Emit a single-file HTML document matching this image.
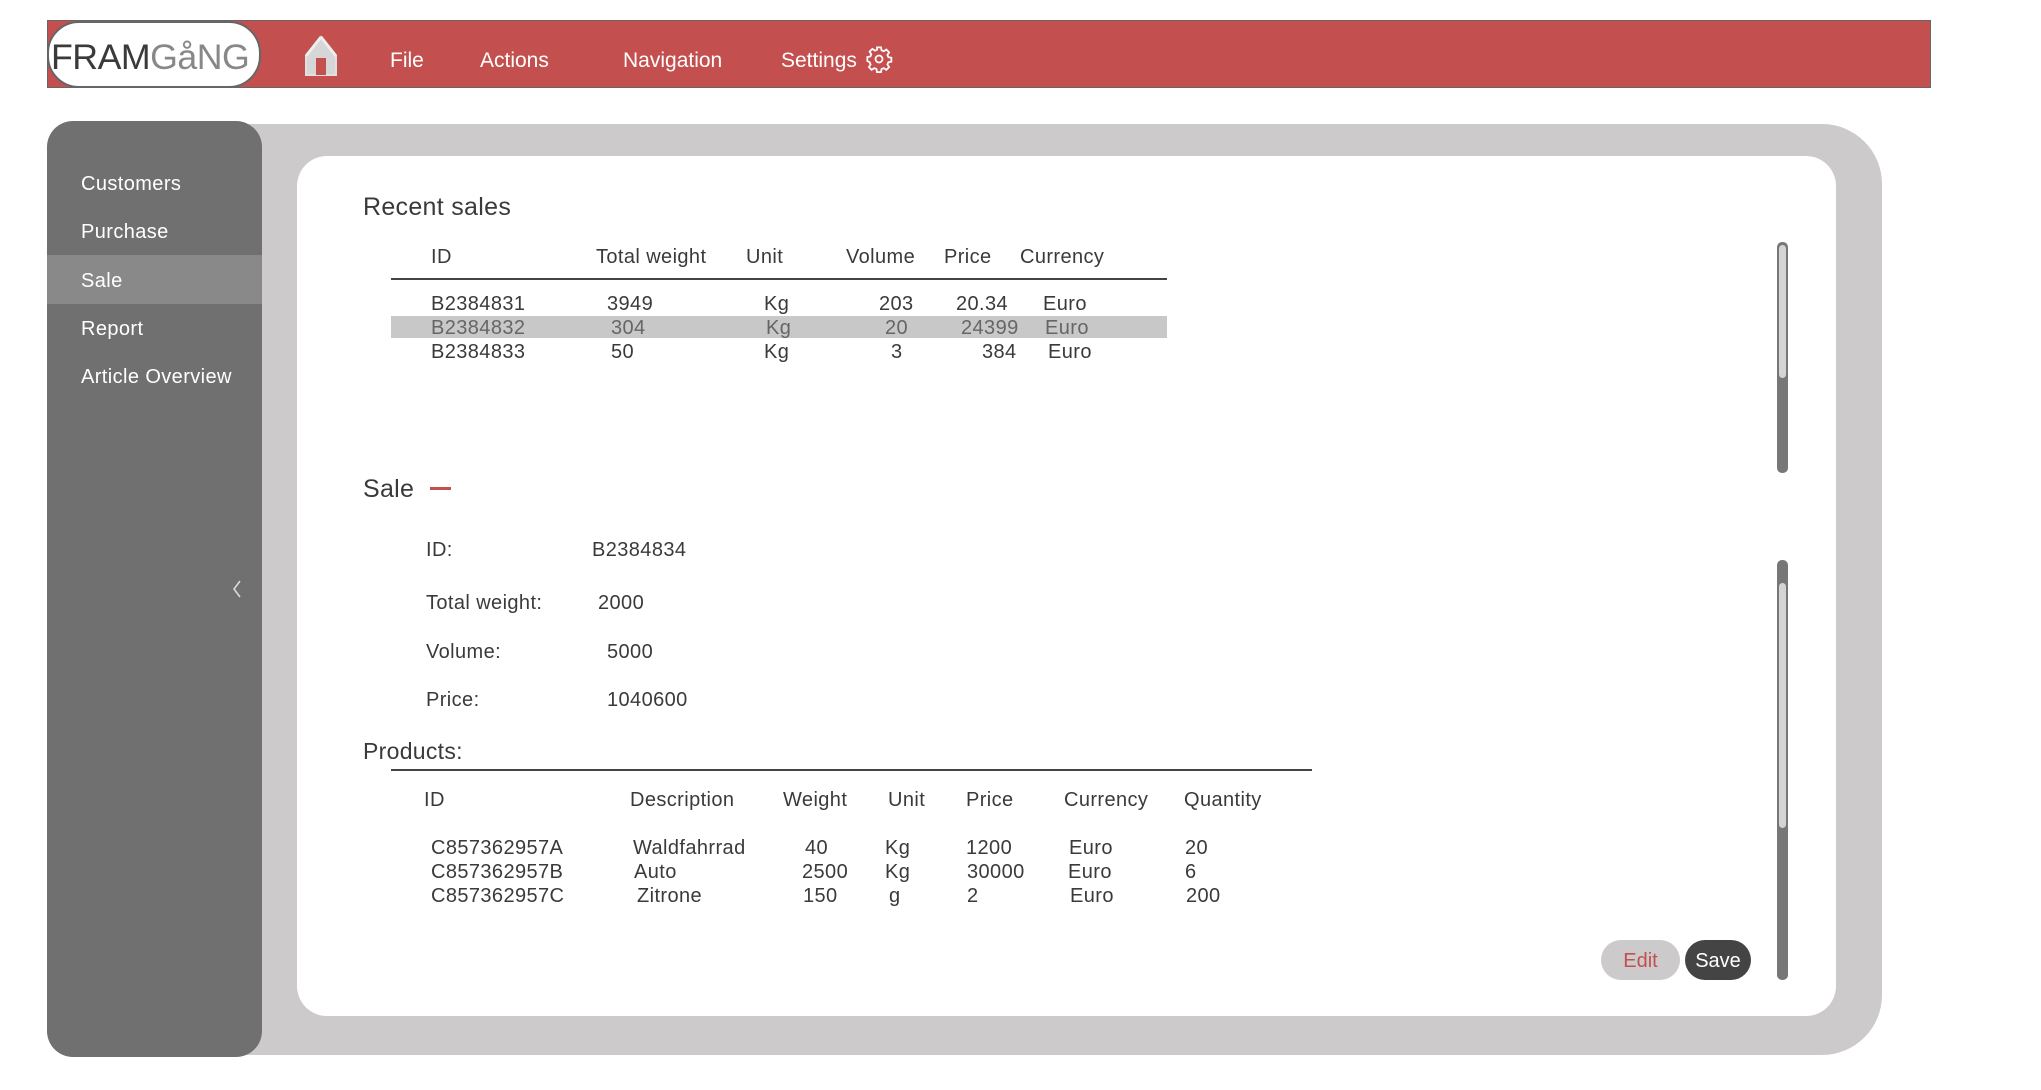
<!DOCTYPE html>
<html><head><meta charset="utf-8"><style>
*{margin:0;padding:0;box-sizing:border-box}
body{width:2041px;height:1090px;background:#fff;position:relative;overflow:hidden;font-family:"Liberation Sans",sans-serif;color:#3a3a3a}
.a{position:absolute;white-space:nowrap;line-height:1}
.t{font-size:20px;letter-spacing:0.4px;margin-top:2px}
.w{color:#fff}
</style></head><body>
<!-- navbar -->
<div class="a" style="left:47px;top:20px;width:1884px;height:68px;background:#c44f4f;border:1px solid #666;"></div>
<div class="a" style="left:47px;top:21px;width:214px;height:67px;background:#fff;border:2px solid #666;border-radius:32px;"></div>
<div class="a" style="left:51px;top:40px;font-size:35px;letter-spacing:-0.5px;transform:scaleX(1.02);transform-origin:left"><span style="color:#3a3a3a">FRAM</span><span style="color:#888">GåNG</span></div>
<svg class="a" style="left:303px;top:34px" width="36" height="44" viewBox="0 0 36 44">
<path d="M18 3 L33 22 L33 41 L3 41 L3 22 Z" fill="#d6d6d6" stroke="#e0e0e0" stroke-width="2"/>
<path d="M18 3 L33 22 M18 3 L3 22" stroke="#eee" stroke-width="3" fill="none"/>
<rect x="13" y="24" width="10" height="17" fill="#c44f4f"/>
</svg>
<div class="a w" style="left:390px;top:50px;font-size:21px">File</div>
<div class="a w" style="left:480px;top:50px;font-size:21px">Actions</div>
<div class="a w" style="left:623px;top:50px;font-size:21px">Navigation</div>
<div class="a w" style="left:781px;top:50px;font-size:21px">Settings</div>
<svg class="a" style="left:865px;top:45px" width="28" height="28" viewBox="0 0 24 24" fill="none" stroke="#fff" stroke-width="1.5">
<circle cx="12" cy="12" r="3"/>
<path d="M10.3 2h3.4l.5 2.6 1.9.8 2.2-1.5 2.4 2.4-1.5 2.2.8 1.9 2.6.5v3.4l-2.6.5-.8 1.9 1.5 2.2-2.4 2.4-2.2-1.5-1.9.8-.5 2.6h-3.4l-.5-2.6-1.9-.8-2.2 1.5-2.4-2.4 1.5-2.2-.8-1.9L2 13.7v-3.4l2.6-.5.8-1.9-1.5-2.2 2.4-2.4 2.2 1.5 1.9-.8z"/>
</svg>
<!-- gray panel -->
<div class="a" style="left:200px;top:124px;width:1682px;height:931px;background:#cccacb;border-radius:0 60px 60px 0;"></div>
<!-- sidebar -->
<div class="a" style="left:47px;top:121px;width:215px;height:936px;background:#707070;border-radius:26px;"></div>
<div class="a" style="left:47px;top:255px;width:215px;height:49px;background:#898989;"></div>
<div class="a w t" style="left:81px;top:172px">Customers</div>
<div class="a w t" style="left:81px;top:220px">Purchase</div>
<div class="a w t" style="left:81px;top:269px">Sale</div>
<div class="a w t" style="left:81px;top:317px">Report</div>
<div class="a w t" style="left:81px;top:365px">Article Overview</div>
<svg class="a" style="left:231px;top:579px" width="12" height="20" viewBox="0 0 12 20"><path d="M9 2 L3 10 L9 18" stroke="#ddd" stroke-width="1.5" fill="none"/></svg>
<!-- white card -->
<div class="a" style="left:297px;top:156px;width:1539px;height:860px;background:#fff;border-radius:30px;"></div>
<div class="a" style="left:363px;top:195px;font-size:25px;letter-spacing:0.3px">Recent sales</div>
<div class="a t" style="left:431px;top:245px">ID</div>
<div class="a t" style="left:596px;top:245px">Total weight</div>
<div class="a t" style="left:746px;top:245px">Unit</div>
<div class="a t" style="left:846px;top:245px">Volume</div>
<div class="a t" style="left:944px;top:245px">Price</div>
<div class="a t" style="left:1020px;top:245px">Currency</div>
<div class="a" style="left:391px;top:278px;width:776px;height:2px;background:#444"></div>
<div class="a" style="left:391px;top:316px;width:776px;height:22px;background:#c8c8c8"></div>
<div class="a t" style="left:431px;top:292px">B2384831</div><div class="a t" style="left:607px;top:292px">3949</div><div class="a t" style="left:764px;top:292px">Kg</div><div class="a t" style="left:879px;top:292px">203</div><div class="a t" style="left:956px;top:292px">20.34</div><div class="a t" style="left:1043px;top:292px">Euro</div>
<div class="a t" style="left:431px;top:316px;color:#666">B2384832</div><div class="a t" style="left:611px;top:316px;color:#666">304</div><div class="a t" style="left:766px;top:316px;color:#666">Kg</div><div class="a t" style="left:885px;top:316px;color:#666">20</div><div class="a t" style="left:961px;top:316px;color:#666">24399</div><div class="a t" style="left:1045px;top:316px;color:#666">Euro</div>
<div class="a t" style="left:431px;top:340px">B2384833</div><div class="a t" style="left:611px;top:340px">50</div><div class="a t" style="left:764px;top:340px">Kg</div><div class="a t" style="left:891px;top:340px">3</div><div class="a t" style="left:982px;top:340px">384</div><div class="a t" style="left:1048px;top:340px">Euro</div>
<!-- scrollbar 1 -->
<div class="a" style="left:1777px;top:242px;width:11px;height:231px;background:#777;border-radius:5px"></div>
<div class="a" style="left:1779px;top:245px;width:7px;height:133px;background:#d4d4d4;border-radius:4px"></div>
<!-- sale -->
<div class="a" style="left:363px;top:477px;font-size:25px;letter-spacing:0.3px">Sale</div>
<div class="a" style="left:430px;top:487px;width:21px;height:3px;background:#c44f4f"></div>
<div class="a t" style="left:426px;top:538px">ID:</div><div class="a t" style="left:592px;top:538px">B2384834</div>
<div class="a t" style="left:426px;top:591px">Total weight:</div><div class="a t" style="left:598px;top:591px">2000</div>
<div class="a t" style="left:426px;top:640px">Volume:</div><div class="a t" style="left:607px;top:640px">5000</div>
<div class="a t" style="left:426px;top:688px">Price:</div><div class="a t" style="left:607px;top:688px">1040600</div>
<div class="a" style="left:363px;top:740px;font-size:23px;letter-spacing:0.3px">Products:</div>
<div class="a" style="left:391px;top:769px;width:921px;height:2px;background:#444"></div>
<div class="a t" style="left:424px;top:788px">ID</div><div class="a t" style="left:630px;top:788px">Description</div><div class="a t" style="left:783px;top:788px">Weight</div><div class="a t" style="left:888px;top:788px">Unit</div><div class="a t" style="left:966px;top:788px">Price</div><div class="a t" style="left:1064px;top:788px">Currency</div><div class="a t" style="left:1184px;top:788px">Quantity</div>
<div class="a t" style="left:431px;top:836px">C857362957A</div><div class="a t" style="left:633px;top:836px">Waldfahrrad</div><div class="a t" style="left:805px;top:836px">40</div><div class="a t" style="left:885px;top:836px">Kg</div><div class="a t" style="left:966px;top:836px">1200</div><div class="a t" style="left:1069px;top:836px">Euro</div><div class="a t" style="left:1185px;top:836px">20</div>
<div class="a t" style="left:431px;top:860px">C857362957B</div><div class="a t" style="left:634px;top:860px">Auto</div><div class="a t" style="left:802px;top:860px">2500</div><div class="a t" style="left:885px;top:860px">Kg</div><div class="a t" style="left:967px;top:860px">30000</div><div class="a t" style="left:1068px;top:860px">Euro</div><div class="a t" style="left:1185px;top:860px">6</div>
<div class="a t" style="left:431px;top:884px">C857362957C</div><div class="a t" style="left:637px;top:884px">Zitrone</div><div class="a t" style="left:803px;top:884px">150</div><div class="a t" style="left:889px;top:884px">g</div><div class="a t" style="left:967px;top:884px">2</div><div class="a t" style="left:1070px;top:884px">Euro</div><div class="a t" style="left:1186px;top:884px">200</div>
<!-- scrollbar 2 -->
<div class="a" style="left:1777px;top:560px;width:11px;height:420px;background:#777;border-radius:5px"></div>
<div class="a" style="left:1779px;top:583px;width:7px;height:245px;background:#d4d4d4;border-radius:4px"></div>
<!-- buttons -->
<div class="a" style="left:1601px;top:940px;width:79px;height:40px;background:#cccacb;border-radius:20px;color:#c44f4f;font-size:20px;text-align:center;line-height:42px">Edit</div>
<div class="a" style="left:1685px;top:940px;width:66px;height:40px;background:#444;border-radius:20px;color:#fff;font-size:20px;text-align:center;line-height:42px">Save</div>
</body></html>
